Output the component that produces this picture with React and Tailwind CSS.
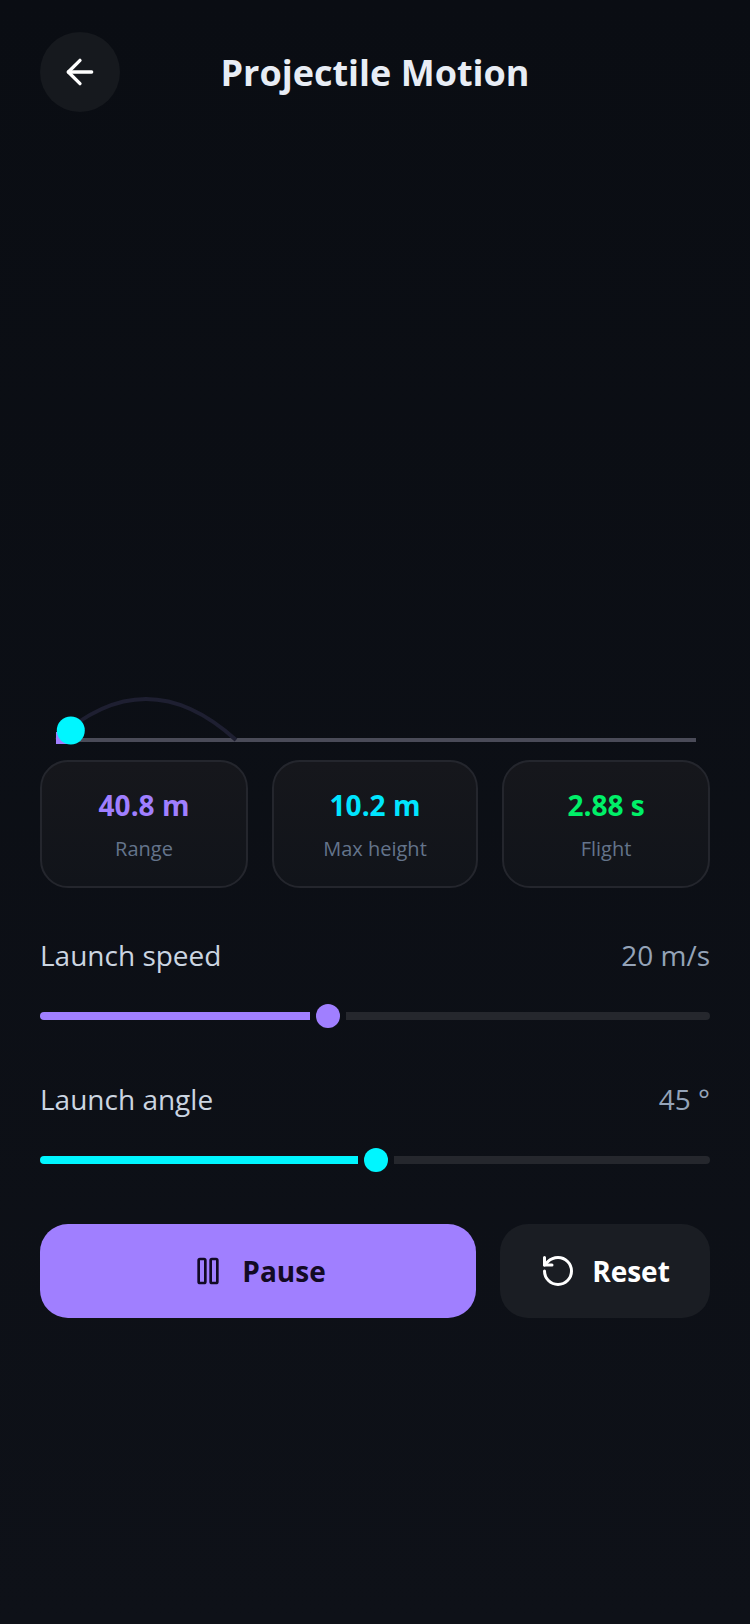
import React from "react";
import { ArrowLeft, Pause, RotateCcw } from "lucide-react";

const stats = [
  { value: "40.8 m", label: "Range", color: "text-[#a07fff]" },
  { value: "10.2 m", label: "Max height", color: "text-[#00e5ff]" },
  { value: "2.88 s", label: "Flight", color: "text-[#00f068]" },
];

const StatCard = ({ value, label, color }) => {
  return (
    <div className="h-[128px] rounded-[28px] border-2 border-[#24262d] bg-gradient-to-b from-[#16171c] to-[#11141a] flex flex-col items-center pt-[21px]">
      <div className={`text-[28px] leading-[44px] font-bold ${color}`}>{value}</div>
      <div className="mt-[7px] text-[20px] leading-[30px] text-[#64748b]">{label}</div>
    </div>
  );
};

const Slider = ({ label, value, fill, thumbLeft, fillWidth, trackLeft }) => {
  return (
    <div>
      <div className="flex justify-between items-center h-10 text-[28px]">
        <span className="text-[#cbd5e1]">{label}</span>
        <span className="text-[#94a3b8]">{value}</span>
      </div>
      <div className="relative h-6 mt-[29px]">
        <div className={`absolute top-2 h-2 right-0 rounded-r-full bg-[#25272d] ${trackLeft}`}></div>
        <div className={`absolute top-2 h-2 left-0 rounded-l-full ${fill} ${fillWidth}`}></div>
        <div className={`absolute top-0 w-6 h-6 rounded-full ${fill} ${thumbLeft}`}></div>
      </div>
    </div>
  );
};

const App = () => {
  return (
    <div className="w-[750px] h-[1624px] overflow-hidden bg-gradient-to-b from-[#0a0d13] to-[#0e1118] font-['Open_Sans',sans-serif]">
      {/* Header */}
      <div className="relative h-20 mt-8 mx-10 flex items-center justify-center">
        <button className="absolute left-0 top-0 w-20 h-20 rounded-full bg-[#16191e] flex items-center justify-center text-white">
          <ArrowLeft size={40} strokeWidth={2} />
        </button>
        <h1 className="text-[36px] font-bold text-[#e8edf5] pt-[2px]">Projectile Motion</h1>
      </div>

      {/* Simulation canvas */}
      <svg className="block mt-[28px]" width="750" height="620" viewBox="0 140 750 620">
        <rect x="56" y="738" width="640" height="4" fill="#4a4b58" />
        <path d="M56 740 Q146 658 236 740" fill="none" stroke="#1e1f31" strokeWidth="4" />
        <rect x="56" y="732" width="12" height="12" fill="#a07fff" />
        <circle cx="70.8" cy="730.5" r="14" fill="#00f6ff" />
      </svg>

      <div className="px-10">
        {/* Stats */}
        <div className="grid grid-cols-[208px_206px_208px] gap-6">
          {stats.map((s) => (
            <StatCard key={s.label} {...s} />
          ))}
        </div>

        {/* Sliders */}
        <div className="mt-[47px] flex flex-col gap-[51px]">
          <Slider
            label="Launch speed"
            value="20 m/s"
            fill="bg-[#a07fff]"
            thumbLeft="left-[276px]"
            fillWidth="w-[270px]"
            trackLeft="left-[306px]"
          />
          <Slider
            label="Launch angle"
            value="45 °"
            fill="bg-[#00f6ff]"
            thumbLeft="left-[324px]"
            fillWidth="w-[318px]"
            trackLeft="left-[354px]"
          />
        </div>

        {/* Actions */}
        <div className="mt-[52px] flex gap-6">
          <button className="h-[94px] w-[436px] rounded-[28px] bg-[#a07fff] flex items-center justify-center gap-4 text-[#120a24]">
            <span className="w-9 flex justify-center">
              <Pause size={32} strokeWidth={2} />
            </span>
            <span className="text-[28px] font-bold">Pause</span>
          </button>
          <button className="h-[94px] flex-1 rounded-[28px] bg-[#1a1d23] flex items-center justify-center gap-4 text-white">
            <RotateCcw size={36} strokeWidth={2} />
            <span className="text-[28px] font-bold">Reset</span>
          </button>
        </div>
      </div>
    </div>
  );
};

export default App;
